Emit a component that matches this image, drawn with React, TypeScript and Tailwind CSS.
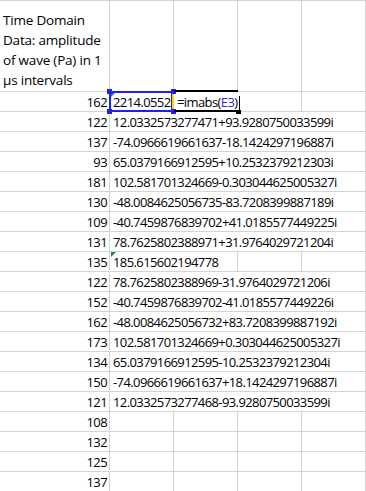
const rows: [string, string][] = [
  ["122", "12.0332573277471+93.9280750033599i"],
  ["137", "-74.0966619661637-18.1424297196887i"],
  ["93", "65.0379166912595+10.2532379212303i"],
  ["181", "102.581701324669-0.303044625005327i"],
  ["130", "-48.0084625056735-83.7208399887189i"],
  ["109", "-40.7459876839702+41.0185577449225i"],
  ["131", "78.7625802388971+31.9764029721204i"],
  ["135", "185.615602194778"],
  ["122", "78.7625802388969-31.9764029721206i"],
  ["152", "-40.7459876839702-41.0185577449226i"],
  ["162", "-48.0084625056732+83.7208399887192i"],
  ["173", "102.581701324669+0.303044625005327i"],
  ["134", "65.0379166912595-10.2532379212304i"],
  ["150", "-74.0966619661637+18.1424297196887i"],
  ["121", "12.0332573277468-93.9280750033599i"],
  ["108", ""],
  ["132", ""],
  ["125", ""],
  ["137", ""],
];

// how many columns the text in column B runs across
const spanOf = (text: string) => (text.length > 20 ? 4 : text.length > 10 ? 2 : 1);

const Empty = () => <div className="w-[64px] h-full shrink-0 border-r border-[#d4d4d4]" />;

const GreenMark = () => (
  <div className="absolute left-px top-0 w-0 h-0 border-t-[5px] border-t-[#1f8a3a] border-r-[5px] border-r-transparent" />
);

const Row = ({ num, text }: { num: string; text: string }) => {
  const span = spanOf(text);
  return (
    <div className="flex h-[20px] border-b border-[#d4d4d4]">
      <div className="w-[110px] shrink-0 border-r border-[#d4d4d4] text-right pr-[2px] leading-[19px] pt-px">
        {num}
      </div>
      <div
        className={`relative shrink-0 border-r border-[#d4d4d4] pl-[3px] leading-[19px] pt-px whitespace-nowrap ${
          span === 4 ? "w-[256px]" : span === 2 ? "w-[128px]" : "w-[64px]"
        }`}
      >
        {text === "185.615602194778" && <GreenMark />}
        {text}
      </div>
      {Array.from({ length: 4 - span }).map((_, i) => (
        <Empty key={i} />
      ))}
    </div>
  );
};

export default function App() {
  return (
    <div
      className="w-[366px] h-[491px] bg-white text-[13px] tracking-[-0.6px] text-black overflow-hidden"
      style={{ fontFamily: '"Open Sans", sans-serif' }}
    >
      <div className="border-t border-[#d4d4d4]">
        {/* header row */}
        <div className="flex h-[91px] border-b border-[#d4d4d4]">
          <div className="w-[110px] shrink-0 border-r border-[#d4d4d4] flex items-end pl-[3px] text-[13.5px] tracking-[-0.2px] leading-[20px] whitespace-nowrap pb-[1px]">
            <div>
              Time Domain
              <br />
              Data: amplitude
              <br />
              of wave (Pa) in 1
              <br />
              µs intervals
            </div>
          </div>
          <Empty />
          <Empty />
          <Empty />
          <Empty />
        </div>

        {/* active row */}
        <div className="flex h-[20px] border-b border-[#d4d4d4]">
          <div className="w-[110px] shrink-0 border-r border-[#d4d4d4] text-right pr-[2px] leading-[19px] pt-px">
            162
          </div>
          <div className="relative w-[64px] shrink-0 pl-[3px] leading-[19px] pt-px whitespace-nowrap">
            <GreenMark />
            2214.0552
            <div className="absolute -left-px -top-px w-[64px] h-[21px] border-2 border-[#2020f0]" />
            <div className="absolute -left-[3px] -top-[3px] w-[5px] h-[5px] bg-[#2020f0]" />
            <div className="absolute -left-[3px] -bottom-[3px] w-[5px] h-[5px] bg-[#2020f0]" />
            <div className="absolute right-0 top-[1px] w-[2px] h-[17px] bg-[#ffd400]" />
            <div className="absolute -right-[2px] -top-[3px] w-[5px] h-[5px] bg-[#2020f0]" />
            <div className="absolute -right-[2px] -bottom-[3px] w-[5px] h-[5px] bg-[#2020f0]" />
          </div>
          <div className="relative w-[128px] shrink-0 border-r border-[#d4d4d4] pl-[3px] leading-[19px] pt-px whitespace-nowrap">
            <div className="absolute left-0 -top-[2px] w-[64px] h-[2px] bg-black" />
            <div className="absolute left-0 -bottom-px w-[64px] h-[2px] bg-black" />
            <div className="absolute left-[62px] -bottom-[3px] w-[5px] h-[4px] bg-black" />
            <span>=imabs(</span>
            <span className="text-[#2b2bd6]">E3</span>
            <span>)</span>
            <span className="inline-block w-px h-[15px] bg-black align-middle ml-[2px]" />
          </div>
          <Empty />
        </div>

        {rows.map(([n, t], i) => (
          <Row key={i} num={n} text={t} />
        ))}
      </div>
    </div>
  );
}
